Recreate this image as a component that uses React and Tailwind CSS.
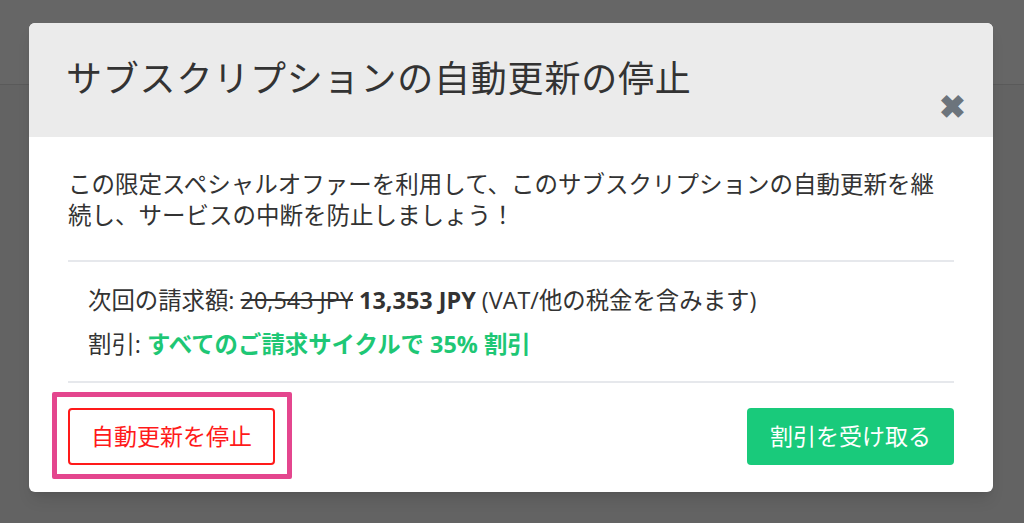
export default function App() {
  const font = { fontFamily: '"Open Sans", "Noto Sans CJK JP", sans-serif' };
  return (
    <div className="relative h-[523px] w-[1024px] overflow-hidden bg-[#636363]" style={font}>
      {/* page behind the overlay */}
      <div className="h-[85px] border-b border-[#5a5a5a] bg-[#666666]" />

      {/* modal */}
      <div className="absolute left-[29px] top-[23px] w-[964px] overflow-hidden rounded-[6px] bg-white shadow-lg">
        <div className="relative flex h-[114px] items-center bg-[#ebebeb] pl-[37px] pr-[40px]">
          <h2 className="-mt-[2px] text-[36px] leading-none font-normal text-[#333333] tracking-[0.8px]">
            サブスクリプションの自動更新の停止
          </h2>
          <span className="absolute right-[27px] top-[67px] text-[32px] leading-none font-black text-[#6c747c]">✖</span>
        </div>

        <div className="px-[39px] pt-[32px] pb-[27px]">
          <p className="text-[23.5px] leading-[31px] text-[#333333]">
            この限定スペシャルオファーを利用して、このサブスクリプションの自動更新を継続し、サービスの中断を防止しましょう！
          </p>

          <div className="mt-[29px] border-t-2 border-[#e6e8ec] pl-[20px] pt-[22px] pb-[21px] text-[23.4px] text-[#333333]">
            <p className="leading-[32px]">
              次回の請求額: <span className="line-through">20,543 JPY</span>{" "}
              <span className="font-bold">13,353 JPY</span> (VAT/他の税金を含みます)
            </p>
            <p className="mt-[12px] leading-[32px]">
              割引: <span className="font-bold text-[#1ec775]">すべてのご請求サイクルで 35% 割引</span>
            </p>
          </div>

          <div className="flex items-center justify-between border-t-2 border-[#e6e8ec] pt-[25px]">
            <div className="relative">
              <button className="h-[57px] w-[207px] rounded-[4px] border-2 border-[#ff1a1a] bg-white text-[23px] text-[#ff1a1a]">
                自動更新を停止
              </button>
              <div className="pointer-events-none absolute -left-[16px] -top-[16px] h-[87px] w-[240px] rounded-[2px] border-[5px] border-[#e4468e]" />
            </div>
            <button className="h-[57px] w-[207px] rounded-[4px] bg-[#19ca7b] text-[23px] text-white">
              割引を受け取る
            </button>
          </div>
        </div>
      </div>
    </div>
  );
}
